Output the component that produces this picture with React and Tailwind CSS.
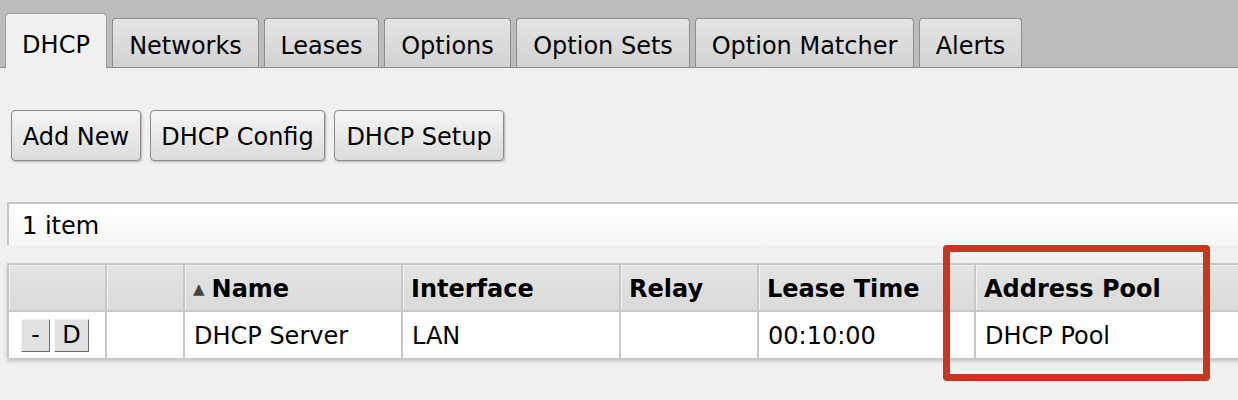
import React from 'react';

const TABS = [
  { label: 'DHCP', w: 'w-[102px]', active: true },
  { label: 'Networks', w: 'w-[147px]' },
  { label: 'Leases', w: 'w-[115px]' },
  { label: 'Options', w: 'w-[127px]' },
  { label: 'Option Sets', w: 'w-[174px]' },
  { label: 'Option Matcher', w: 'w-[219px]' },
  { label: 'Alerts', w: 'w-[103px]' },
];

const COLS = [
  { key: 'ctl', label: '', w: 'w-[98px]' },
  { key: 'blank', label: '', w: 'w-[78px]' },
  { key: 'name', label: 'Name', w: 'w-[218px]', sort: true },
  { key: 'iface', label: 'Interface', w: 'w-[218px]' },
  { key: 'relay', label: 'Relay', w: 'w-[138px]' },
  { key: 'lease', label: 'Lease Time', w: 'w-[217px]' },
  { key: 'pool', label: 'Address Pool', w: 'w-[300px]' },
];

const ROW = { name: 'DHCP Server', iface: 'LAN', relay: '', lease: '00:10:00', pool: 'DHCP Pool' };

function Tab({ label, w, active }) {
  if (active) {
    return (
      <div className={`${w} h-[55px] -mb-px flex items-start justify-center pt-[19px] bg-[#f0f0f0] border border-b-0 border-[#9a9a9a] rounded-t-[5px]`}>
        {label}
      </div>
    );
  }
  return (
    <div className={`${w} h-[49px] flex items-start justify-center pt-[15px] bg-gradient-to-b from-[#e4e4e4] to-[#d2d2d2] border border-b-0 border-[#8e8e8e] rounded-t-[4px]`}>
      {label}
    </div>
  );
}

function ToolButton({ children, w }) {
  return (
    <button className={`${w} h-[51px] flex items-center justify-center pt-[2px] rounded-[4px] border border-[#8a8a8a] bg-gradient-to-b from-[#f5f5f5] to-[#dcdcdc] shadow-[1px_1px_2px_rgba(0,0,0,0.25)]`}>
      {children}
    </button>
  );
}

function SmallButton({ children, w }) {
  return (
    <button className={`${w} h-[33px] flex items-center justify-center bg-[#e2e2e2] border border-t-[#f4f4f4] border-l-[#f4f4f4] border-r-[#6c6c6c] border-b-[#6c6c6c]`}>
      {children}
    </button>
  );
}

export default function App() {
  return (
    <div className="relative w-[1238px] h-[400px] overflow-hidden bg-[#f0f0f0] text-[24px] leading-none text-black font-['DejaVu_Sans',Verdana,sans-serif]">
      {/* Tab strip */}
      <div className="h-[68px] bg-[#bcbcbc] border-b border-[#8c8c8c] flex items-end gap-[5px] pl-[5px]">
        {TABS.map((t) => <Tab key={t.label} {...t} />)}
      </div>

      {/* Toolbar */}
      <div className="flex gap-[9px] pl-[11px] pt-[42px]">
        <ToolButton w="w-[130px]">Add New</ToolButton>
        <ToolButton w="w-[175px]">DHCP Config</ToolButton>
        <ToolButton w="w-[170px]">DHCP Setup</ToolButton>
      </div>

      {/* Item count */}
      <div className="ml-[7px] mt-[41px] w-[1260px] h-[43px] flex items-center pl-[13px] pt-[3px] border-t-2 border-l-2 border-[#c6c6c6] bg-gradient-to-b from-white to-[#f6f6f6]">
        1 item
      </div>

      {/* Table */}
      <div className="ml-[7px] mt-[18px] w-[1260px] border-t-2 border-l-2 border-[#c8c8c8] shadow-[0_3px_4px_rgba(0,0,0,0.2)]">
        <div className="flex h-[47px] border-b-2 border-[#c8c8c8]">
          {COLS.map((c) => (
            <div key={c.key} className={`${c.w} shrink-0 flex items-center pl-[8px] pt-[3px] font-bold border-r-2 border-[#c8c8c8] bg-gradient-to-b from-[#e4e4e4] to-[#dadada] shadow-[inset_1px_1px_0_#f2f2f2]`}>
              {c.sort && <span className="text-[15px] text-[#444] mr-[7px] mt-[1px]">▲</span>}
              {c.label}
            </div>
          ))}
        </div>
        <div className="flex h-[46px] bg-white">
          {COLS.map((c) => (
            <div key={c.key} className={`${c.w} shrink-0 flex items-center pl-[9px] pt-[2px] border-r-2 border-[#c8c8c8]`}>
              {c.key === 'ctl' ? (
                <div className="flex gap-[4px] pl-[3px] -mt-[2px]">
                  <SmallButton w="w-[29px]">-</SmallButton>
                  <SmallButton w="w-[35px]">D</SmallButton>
                </div>
              ) : (
                ROW[c.key] || ''
              )}
            </div>
          ))}
        </div>
      </div>

      {/* Highlight annotation */}
      <div className="absolute left-[943px] top-[245px] w-[267px] h-[136px] border-[7px] border-[#c9351f] rounded-[4px]" />
    </div>
  );
}
